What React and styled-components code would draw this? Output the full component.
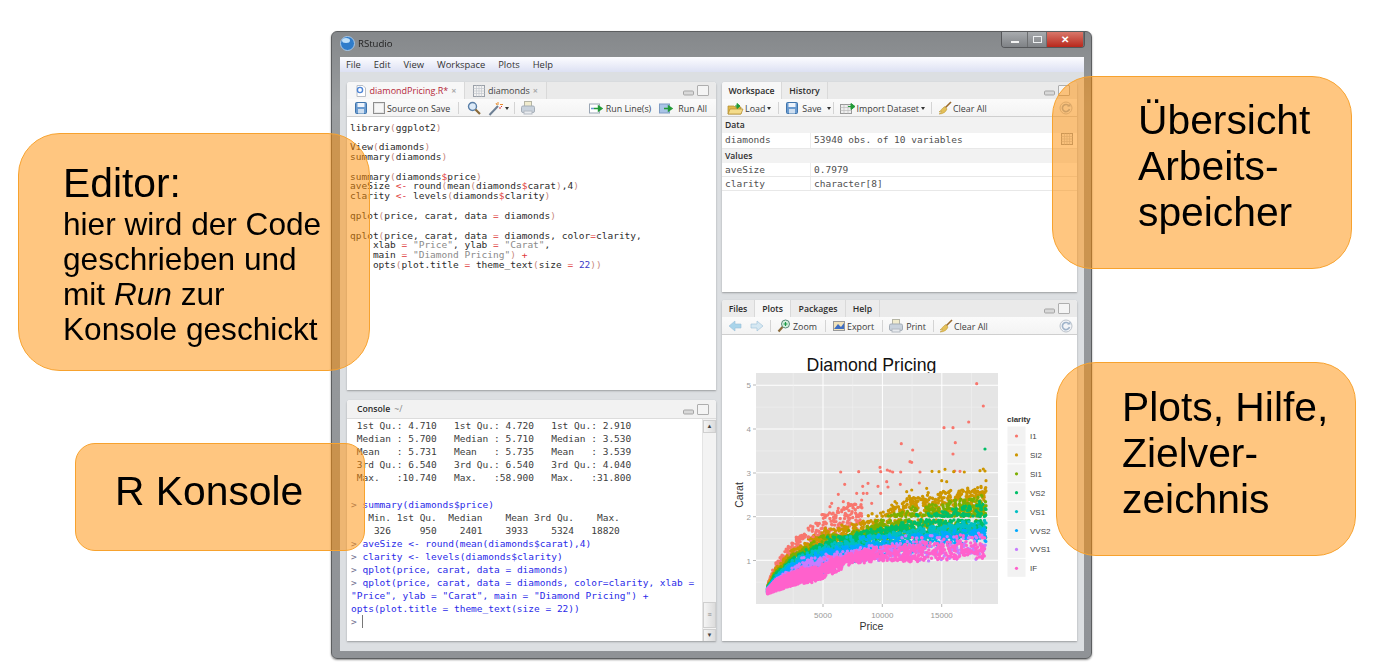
import React from "react";
import styled, { createGlobalStyle } from "styled-components";

const Global = createGlobalStyle`
  html, body { margin: 0; padding: 0; background: #fff; }
  body { font-family: "Liberation Sans", Arial, sans-serif; }
`;

const Page = styled.div`
  position: relative; width: 1385px; height: 670px; overflow: hidden; background: #fff;
  padding: 31px 0 0 331px; box-sizing: border-box;
`;
const Win = styled.div`
  width: 761px; height: 628px; box-sizing: border-box; display: flex; flex-direction: column;
  background: linear-gradient(#85888b, #9a9d9f 12%, #8f9296); border: 1px solid #5c5e60; border-radius: 6px;
  box-shadow: 0 1px 2px rgba(0,0,0,.45); padding: 0 7px 7px 8px; filter: blur(.5px);
`;
const TitleBar = styled.div`
  height: 25px; flex: none; display: flex; align-items: flex-start;
`;
const AppLogo = styled.svg`width: 15px; height: 15px; margin: 4px 3px 0 0; flex: none;`;
const AppTitle = styled.span`font: 9.6px/24px "Open Sans", sans-serif; color: #222;`;
const Controls = styled.div`
  margin-left: auto; display: flex; height: 15px; border: 1px solid #55575a; border-top: 0;
  border-radius: 0 0 4px 4px; overflow: hidden; margin-right: -1px;
`;
const Ctl = styled.div`
  width: ${p => p.$w}px; display: flex; align-items: center; justify-content: center;
  background: ${p => p.$red ? "linear-gradient(#d9776a,#b8281c)" : "linear-gradient(#a8abae,#7f8286)"};
  border-right: 1px solid #6c6e70; color: #fff; font: bold 10px/1 "Liberation Sans", sans-serif;
`;
const MinGlyph = styled.i`width: 8px; height: 2px; background: #f4f4f4; margin-top: 4px;`;
const MaxGlyph = styled.i`width: 7px; height: 5px; border: 1.5px solid #eef0f2;`;
const MenuBar = styled.div`
  height: 15px; flex: none; display: flex; align-items: center; gap: 13px; padding-left: 6px;
  background: linear-gradient(#fcfcff, #dde1f3); font: 9.4px "Open Sans", sans-serif; color: #333;
`;
const Body = styled.div`
  flex: 1; min-height: 0; background: #dcdfe2; display: grid; grid-template-columns: 369px 355px;
  gap: 6px; padding: 10px 7px 10px 7px;
`;
const Column = styled.div`display: flex; flex-direction: column; gap: ${p => p.$gap}px; min-height: 0;`;
const Pane = styled.section`
  height: ${p => p.$h}px; flex: none; display: flex; flex-direction: column; background: #fff; position: relative;
  box-shadow: 0 1px 2px rgba(0,0,0,.3); border-radius: 3px 3px 0 0; overflow: hidden;
`;
const TabBar = styled.div`
  height: 17px; flex: none; display: flex; align-items: stretch; background: #eaeaea;
  font: 600 8.7px "Open Sans", sans-serif; color: #2c2c2c;
`;
const Tab = styled.div`
  width: ${p => p.$w}px; flex: none; display: flex; align-items: center; justify-content: center; gap: 3px; box-sizing: border-box;
  background: ${p => p.$on ? "#f7f7f7" : "#ececec"}; border-right: 1px solid #d9d9d9; white-space: nowrap;
`;
const DocName = styled.span`color: ${p => p.$c}; font-weight: 400; font-size: 9px;`;
const Close = styled.span`color: #aaa; font-size: 9px; font-weight: 700;`;
const PaneCtl = styled.svg`margin-left: auto; width: 27px; height: 13px; margin-right: 6px; align-self: center; flex: none;`;
const Toolbar = styled.div`
  height: 18px; flex: none; display: flex; align-items: center; box-sizing: border-box;
  background: linear-gradient(#fbfbfb, #f3f3f3); border-bottom: 1px solid #cfcfcf;
  font: 8.9px "Open Sans", sans-serif; color: #3c3c3c; padding: 1px 0 0 ${p => p.$pad}px; white-space: nowrap;
`;
const Item = styled.span`display: inline-flex; align-items: center; gap: ${p => p.$g ?? 2}px; margin-left: ${p => p.$ml || 0}px;`;
const Sep = styled.i`width: 1px; height: 12px; flex: none; background: #d4d4d4; margin: 0 ${p => p.$m ?? 5}px 0 ${p => p.$l ?? p.$m ?? 5}px;`;
const Push = styled.span`margin-left: auto;`;
const Ico = styled.svg`width: ${p => p.$s || 13}px; height: ${p => p.$s || 13}px; flex: none;`;
const Caret = styled.i`width: 0; height: 0; border: 2px solid transparent; border-top: 3px solid #333; border-bottom: 0; margin-left: 1px;`;

const Code = styled.pre`
  margin: 0; padding: 5.5px 0 0 3px; font: 9.5px/9.83px "DejaVu Sans Mono", monospace; color: #2c2c2c;
`;
const Tok = styled.span`color: ${p => ({ op: "#e03a3a", par: "#c98a80", str: "#8a8a8a", num: "#3a3ac8" }[p.$k])};`;
const ConsoleHead = styled.div`
  height: 18px; flex: none; display: flex; align-items: center; background: #f2f2f2; padding-left: 10px;
  font: 600 8.7px "Open Sans", sans-serif; color: #2c2c2c; border-bottom: 1px solid #dcdcdc; gap: 4px;
`;
const Path = styled.span`color: #888; font-weight: 400;`;
const ConsoleBody = styled.div`flex: 1; min-height: 0; display: flex;`;
const ConsoleText = styled.pre`
  flex: 1; margin: 0; padding: 0 0 0 4px; font: 9.5px/13.1px "DejaVu Sans Mono", monospace; color: #3c3c3c; overflow: hidden;
`;
const Input = styled.span`color: #2a2ae8;`;
const Prompt = styled.span`color: #707090;`;
const Cursor = styled.i`display: inline-block; width: 1px; height: 13px; background: #777; vertical-align: -3px;`;
const Scroll = styled.div`
  width: 13px; flex: none; display: flex; flex-direction: column; background: #f3f3f3; border-left: 1px solid #e4e4e4;
`;
const ScrollBtn = styled.div`
  height: 13px; flex: none; margin-top: ${p => p.$top || 0}px; background: linear-gradient(90deg,#f4f4f4,#dcdcdc); border: 1px solid #cfcfcf; box-sizing: border-box;
  color: #444; font-size: 6px; line-height: 11px; text-align: center;
`;
const Thumb = styled(ScrollBtn)`height: 26px; line-height: 24px; font-size: 7px; color: #888;`;
const SectionHead = styled.div`
  height: ${p => p.$h}px; flex: none; background: #f2f2f2; display: flex; align-items: center; padding-left: 3px;
  font: 600 8.6px "Open Sans", sans-serif; color: #2c2c2c;
`;
const Row = styled.div`
  height: ${p => p.$h}px; flex: none; display: grid; grid-template-columns: 89px 1fr auto; align-items: start; border-bottom: 1px solid #e8e8e8; box-sizing: border-box;
  font: 9.5px/13px "DejaVu Sans Mono", monospace; color: #505050; padding-right: 4px;
`;
const Cell = styled.div`padding-left: 3px; height: 100%; border-right: ${p => p.$line ? "1px solid #ececec" : "0"};`;
const PlotArea = styled.div`flex: 1; min-height: 0; display: flex; background: #fff;`;
const PlotSvg = styled.svg`width: 355px; height: 306px; display: block;`;

const Callout = styled.div`
  position: absolute; box-sizing: border-box; left: ${p => p.$x}px; top: ${p => p.$y}px; width: ${p => p.$w}px; height: ${p => p.$h}px;
  border-radius: ${p => p.$r}px; background: rgba(255,141,1,.5); border: 1px solid #f7a22e; color: #000;
  padding: ${p => p.$pt}px 0 0 ${p => p.$pl}px; font-size: 40.8px; line-height: 46px; white-space: nowrap;
`;
const CalloutSmall = styled.div`font-size: 31.6px; line-height: 35.1px; margin-top: 1px;`;

/* ---------- icons ---------- */
const Save = () => (<Ico $s={12} viewBox="0 0 12 12"><rect x=".5" y=".5" width="11" height="11" rx="1" fill="#6a9bd0" stroke="#3f74ab"/><rect x="2.5" y="1" width="7" height="4" fill="#eef4fb"/><rect x="3" y="7" width="6" height="4.5" fill="#cfdff0"/></Ico>);
const Check = () => (<Ico $s={12} viewBox="0 0 12 12"><rect x=".5" y=".5" width="11" height="11" fill="#e4e4e4" stroke="#8e8e8e"/><rect x="2" y="2" width="8" height="8" fill="#f6f6f6"/></Ico>);
const Lens = () => (<Ico $s={14} viewBox="0 0 14 14"><circle cx="5.5" cy="5.5" r="4" fill="#dceaf8" stroke="#5a7fa8" strokeWidth="1.4"/><path d="M8.5 8.5 L13 13" stroke="#8a6a3a" strokeWidth="2.2"/></Ico>);
const Wand = () => (<Ico $s={15} viewBox="0 0 15 15"><path d="M1.5 14 L10 5" stroke="#6d7f94" strokeWidth="2"/><path d="M10 1v3M12 3.5h3M8 2l1 2" stroke="#e88a2a" strokeWidth="1"/><path d="M12 6v2M13 5l1 1" stroke="#d33" strokeWidth="1"/></Ico>);
const Printer = () => (<Ico $s={14} viewBox="0 0 14 14"><rect x="3.5" y=".5" width="7" height="5" fill="#f1ecce" stroke="#b5b5a5"/><rect x=".5" y="5" width="13" height="6.5" rx="1.5" fill="#c9d2dc" stroke="#a4adb7"/><rect x="3" y="10" width="8" height="3" fill="#e8ebef" stroke="#b4bac2"/></Ico>);
const RunLine = () => (<Ico $s={15} viewBox="0 0 15 13"><rect x=".5" y="2" width="10" height="9" fill="#fff" stroke="#9aa6b4"/><path d="M2 6.5h3" stroke="#6a96cf" strokeWidth="1.5"/><path d="M5 6.5h5M9.5 4l3.5 2.5-3.5 2.5z" stroke="#1f9a36" strokeWidth="1.4" fill="#1f9a36"/></Ico>);
const RunAll = () => (<Ico $s={15} viewBox="0 0 15 13"><rect x=".5" y="2" width="10" height="9" fill="#a9c4e6" stroke="#7f9cc4"/><path d="M5 6.5h5M9.5 4l3.5 2.5-3.5 2.5z" stroke="#1f9a36" strokeWidth="1.4" fill="#1f9a36"/></Ico>);
const Folder = () => (<Ico $s={17} viewBox="0 0 17 13"><path d="M1 4h6l1 1h6v7H1z" fill="#e0b84a" stroke="#b08a2c" strokeWidth=".7"/><path d="M1 12l2-5h13l-2 5z" fill="#f4dc8a" stroke="#b08a2c" strokeWidth=".7"/><path d="M8 4h4M10 1.5l3 2.5-3 2.5z" stroke="#1f9a36" fill="#1f9a36"/></Ico>);
const Broom = () => (<Ico $s={14} viewBox="0 0 14 14"><path d="M13 1 L7 7" stroke="#9b6a2c" strokeWidth="1.6"/><path d="M7 5.5 L9 8 C8 11 5 13 1 13 C3 12 3.5 11 3.5 10 C3 10.5 2 11 1 11 C3 9.5 4 7 7 5.5z" fill="#e4c05a" stroke="#b8922e" strokeWidth=".5"/></Ico>);
const ImportIco = () => (<Ico $s={16} viewBox="0 0 16 13"><rect x=".5" y="3" width="11" height="9" fill="#eee" stroke="#999"/><path d="M.5 6h11M.5 9h11M4 3v9M8 3v9" stroke="#bbb" strokeWidth=".7"/><path d="M8 5h4M11 2l4 3-4 3z" stroke="#1f9a36" fill="#1f9a36"/></Ico>);
const Refresh = () => (<Ico $s={14} viewBox="0 0 14 14"><circle cx="7" cy="7" r="6" fill="#f2f4f7" stroke="#bcc3cb"/><path d="M10 5 A3.6 3.6 0 1 0 10.5 8" fill="none" stroke="#9fb3c9" strokeWidth="1.6"/><path d="M8 5.5h3.5V2.5z" fill="#9fb3c9"/></Ico>);
const ArrowIco = ({ flip, c }) => (<Ico $s={14} viewBox="0 0 14 14"><path d={flip ? "M13 7L7 2v3H1v4h6v3z" : "M1 7l6-5v3h6v4H7v3z"} fill={c} stroke="#9cc0d8" strokeWidth=".6"/></Ico>);
const ZoomIco = () => (<Ico $s={14} viewBox="0 0 14 14"><circle cx="8.5" cy="5" r="4" fill="#d7f0df" stroke="#5a8a7a"/><path d="M6.5 5h4M8.5 3v4" stroke="#1a9a46" strokeWidth="1.2"/><path d="M5.5 8 L1.5 12.5" stroke="#8a6a3a" strokeWidth="2.2"/></Ico>);
const ExportIco = () => (<Ico $s={14} viewBox="0 0 14 14"><rect x="1.5" y="2.5" width="11" height="9" fill="#f1e2ba" stroke="#999"/><path d="M2 10l4-5 3 3 3-4v6z" fill="#3f6ec2"/></Ico>);
const DocIco = () => (<Ico $s={12} viewBox="0 0 12 12"><path d="M2 .5h6l2.5 2.5v8.5H2z" fill="#fff" stroke="#b8bec6"/><circle cx="5" cy="5" r="2.6" fill="none" stroke="#4f86d6" strokeWidth="1.4"/></Ico>);
const GridIco = ({ s = 12 }) => (<Ico $s={s} viewBox="0 0 12 12"><rect x=".5" y=".5" width="11" height="11" fill="#f2f2f2" stroke="#9aa0a8"/><path d="M.5 3.5h11M.5 6h11M.5 8.5h11M3.5 .5v11M6 .5v11M8.5 .5v11" stroke="#c4c8cf" strokeWidth=".7"/></Ico>);
const PaneButtons = () => (
  <PaneCtl viewBox="0 0 27 13">
    <rect x=".5" y="7" width="10" height="4" rx="1" fill="#d8d8d8" stroke="#a5a5a5"/>
    <rect x="14.5" y="1.5" width="11" height="10" rx=".5" fill="#f4f4f4" stroke="#aeaeae"/>
  </PaneCtl>
);

/* ---------- editor code ---------- */
const editorCode = `library(ggplot2)

View(diamonds)
summary(diamonds)

summary(diamonds$price)
aveSize <- round(mean(diamonds$carat),4)
clarity <- levels(diamonds$clarity)

qplot(price, carat, data = diamonds)

qplot(price, carat, data = diamonds, color=clarity,
    xlab = "Price", ylab = "Carat",
    main = "Diamond Pricing") +
    opts(plot.title = theme_text(size = 22))`;

const highlight = src =>
  src.split(/("[^"]*"|<-|[=+$]|[()]|\b\d+\b(?!\)\n))/).map((t, i) => {
    if (!t) return null;
    let k = null;
    if (t[0] === '"') k = "str";
    else if (t === "<-" || t === "=" || t === "+" || t === "$") k = "op";
    else if (t === "(" || t === ")") k = "par";
    else if (/^\d+$/.test(t)) k = "num";
    return k ? <Tok key={i} $k={k}>{t}</Tok> : <React.Fragment key={i}>{t}</React.Fragment>;
  });

/* ---------- scatter plot ---------- */
const px = [0.3, 1, 2.5, 5, 7.5, 10, 12.5, 15, 18.8];
/* colour, count, price skew, lower carat envelope, upper carat envelope */
const bands = [
  ["#F8766D", 380, 1.4, [.33,.55,1.05,1.4,1.7,2,2,2,2], [.42,.95,1.48,2.0,2.3,2.3,2.2,2,2]],
  ["#CD9600", 1100, 1.25, [.3,.42,.8,1.1,1.3,1.45,1.7,1.9,2], [.4,.82,1.27,1.68,1.82,2.1,2.5,2.55,2.72]],
  ["#7CAE00", 1100, 1.3, [.28,.42,.7,1,1.15,1.3,1.5,1.6,1.7], [.38,.74,1.15,1.5,1.68,1.9,2.2,2.3,2.5]],
  ["#00BE67", 1300, 1.35, [.25,.38,.6,.9,1.1,1.25,1.4,1.5,1.55], [.37,.7,1.08,1.42,1.6,1.72,1.9,2.1,2.35]],
  ["#00BFC4", 1100, 1.5, [.25,.36,.55,.85,1.1,1.2,1.35,1.45,1.5], [.36,.64,1.02,1.32,1.48,1.58,1.68,1.78,1.95]],
  ["#00A9FF", 1200, 1.9, [.25,.32,.5,.72,1,1.1,1.2,1.35,1.45], [.35,.6,.95,1.22,1.35,1.48,1.55,1.62,1.72]],
  ["#C77CFF", 1000, 2.5, [.25,.31,.48,.68,.98,1.02,1.05,1.07,1.1], [.34,.56,.85,1.1,1.25,1.35,1.45,1.5,1.6]],
  ["#FF61CC", 1900, 3.2, [.23,.29,.42,.58,.95,1,1,1.03,1.05], [.32,.55,.76,.9,1.17,1.3,1.4,1.45,1.52]],
];
const lerp = (ys, p) => {
  for (let i = 0; i < px.length - 1; i++) {
    if (p <= px[i + 1]) return ys[i] + (ys[i + 1] - ys[i]) * (p - px[i]) / (px[i + 1] - px[i]);
  }
  return ys[ys.length - 1];
};
const X = p => 763.6 + p * 11.88;
const Y = c => 604 - c * 43.75;
let seed = 12345;
const rnd = () => { seed = (seed * 16807) % 2147483647; return seed / 2147483647; };
const dot = (x, y) => `M${x.toFixed(1)} ${y.toFixed(1)}h0`;
const bandPaths = bands.map(([color, n, skew, lo, hi], idx) => {
  let d = "";
  for (let i = 0; i < n; i++) {
    const r = rnd();
    const p = idx === 0 ? 0.4 + Math.pow(r, skew) * 8 : 0.33 + Math.pow(r, skew) * 18.4;
    let c = lerp(lo, p) + (lerp(hi, p) - lerp(lo, p)) * rnd();
    if (p > 3 && rnd() < .35) {
      for (const s of [1, 1.5, 2]) if (c > s - .12 && c < s + .12) c = s + rnd() * .05;
    }
    if (p > 3) c += (rnd() - .5) * .09;
    if (c > 1.93 && c < 2.0 && p > 8) continue;
    if (c > 1.44 && c < 1.5 && p > 9 && rnd() < .85) continue;
    d += dot(X(p), Y(c));
  }
  return { color, d };
});
const fromZoom = pts => pts.map(([x, y]) => dot(715 + x / 3, 285 + y / 3)).join("");
const i1Out = fromZoom([[785,296],[805,363],[761,411],[687,428],[714,428],[721,473],[714,507],[559,476],[593,495],[585,530],[590,532],[495,547],[497,560],[377,561],[431,560],[517,555],[525,558],[533,561],[557,561],[615,561],[719,558],[735,559],[389,598],[370,628],[425,625],[443,604],[459,595],[489,604],[515,590],[519,606],[556,598],[613,594],[445,625],[456,625],[497,625],[350,655],[345,665],[330,690],[385,650],[400,655],[380,680],[405,690],[360,690],[370,670],[395,670],[325,700],[410,685],[440,645],[470,655],[250,757],[265,757],[280,757],[295,755],[310,750]]);
const si2Out = fromZoom([[651,559],[672,560],[690,553],[716,560],[748,561],[680,587],[695,590],[795,557],[805,552],[810,558],[813,587],[575,620],[590,615],[540,650],[530,660],[545,655],[635,610],[680,625]]);
const vs2Out = fromZoom([[810,492]]);

const xTicks = [[823, "5000"], [882.3, "10000"], [941.7, "15000"]];
const yTicks = [[385, "5"], [429, "4"], [473, "3"], [516.7, "2"], [560.5, "1"]];
const legend = [["I1","#F8766D"],["SI2","#CD9600"],["SI1","#7CAE00"],["VS2","#00BE67"],["VS1","#00BFC4"],["VVS2","#00A9FF"],["VVS1","#C77CFF"],["IF","#FF61CC"]];

const Plot = () => (
  <PlotSvg viewBox="722 335 355 306" fontFamily="'Liberation Sans', sans-serif">
    <text x="871.5" y="371" textAnchor="middle" fontSize="17.7" fill="#111">Diamond Pricing</text>
    <rect x="756" y="373" width="242" height="231" fill="#e5e5e5"/>
    {[.5,1,1.5,2,2.5,3,3.5,4,4.5,5].map(c => {
      const y = Y(c);
      return <path key={c} d={`M756 ${y}H998`} stroke={Number.isInteger(c) ? "#fff" : "#f0f0f0"} strokeWidth={Number.isInteger(c) ? 1 : .6}/>;
    })}
    {[2500,5000,7500,10000,12500,15000,17500].map(v => {
      const x = X(v / 1000);
      return <path key={v} d={`M${x} 373V604`} stroke={v % 5000 === 0 ? "#fff" : "#f0f0f0"} strokeWidth={v % 5000 === 0 ? 1 : .6}/>;
    })}
    {bandPaths.map(b => <path key={b.color} d={b.d} stroke={b.color} strokeWidth="3.4" strokeLinecap="round" fill="none"/>)}
    <path d={i1Out} stroke="#F8766D" strokeWidth="3.2" strokeLinecap="round" fill="none"/>
    <path d={si2Out} stroke="#CD9600" strokeWidth="3.2" strokeLinecap="round" fill="none"/>
    <path d={vs2Out} stroke="#00BE67" strokeWidth="3.2" strokeLinecap="round" fill="none"/>
    {yTicks.map(([y, l]) => (
      <g key={l}>
        <text x="751" y={y + 3} textAnchor="end" fontSize="8" fill="#999">{l}</text>
        <path d={`M753 ${y}h3`} stroke="#999" strokeWidth=".7"/>
      </g>
    ))}
    {xTicks.map(([x, l]) => (
      <g key={l}>
        <text x={x} y="618" textAnchor="middle" fontSize="8" fill="#999">{l}</text>
        <path d={`M${x} 604v3`} stroke="#999" strokeWidth=".7"/>
      </g>
    ))}
    <text x="871.5" y="630" textAnchor="middle" fontSize="10.5" fill="#333">Price</text>
    <text transform="translate(742.5 495) rotate(-90)" textAnchor="middle" fontSize="10.5" fill="#333">Carat</text>
    <text x="1007" y="422" fontSize="8" fontWeight="700" fill="#333">clarity</text>
    {legend.map(([l, c], i) => (
      <g key={l}>
        <rect x="1007.5" y={426.5 + i * 18.9} width="18" height="18" fill="#f2f2f2"/>
        <circle cx="1016.5" cy={436 + i * 18.9} r="1.6" fill={c}/>
        <text x="1030" y={439 + i * 18.9} fontSize="8" fill="#444">{l}</text>
      </g>
    ))}
  </PlotSvg>
);

const H = ({ children }) => <Input><Prompt>&gt; </Prompt>{children}</Input>;

export default function App() {
  return (
    <Page>
      <Global />
      <Win>
        <TitleBar>
          <AppLogo viewBox="0 0 15 15">
            <circle cx="7.5" cy="7.5" r="7" fill="#2f7cca" stroke="#a8c8e8"/>
            <ellipse cx="6" cy="4.5" rx="4" ry="2.5" fill="#bfe0fa"/>
          </AppLogo>
          <AppTitle>RStudio</AppTitle>
          <Controls>
            <Ctl $w={25}><MinGlyph /></Ctl>
            <Ctl $w={18}><MaxGlyph /></Ctl>
            <Ctl $w={36} $red>✕</Ctl>
          </Controls>
        </TitleBar>
        <MenuBar>
          <span>File</span><span>Edit</span><span>View</span><span>Workspace</span><span>Plots</span><span>Help</span>
        </MenuBar>
        <Body>
          <Column $gap={10}>
            <Pane $h={308}>
              <TabBar>
                <Tab $w={118} $on><DocIco /><DocName $c="#b5283a">diamondPricing.R*</DocName><Close>×</Close></Tab>
                <Tab $w={82}><GridIco /><DocName $c="#444">diamonds</DocName><Close>×</Close></Tab>
                <PaneButtons />
              </TabBar>
              <Toolbar $pad={8}>
                <Save /><Item $ml={6} $g={2}><Check />Source on Save</Item><Sep $m={8} />
                <Lens /><Item $ml={7} $g={1}><Wand /><Caret /></Item><Sep $l={5} $m={6} /><Printer />
                <Push /><Item><RunLine />Run Line(s)</Item><Item $ml={8} $g={4}><RunAll />Run All</Item><Item $ml={9} />
              </Toolbar>
              <Code>{highlight(editorCode)}</Code>
            </Pane>
            <Pane $h={241}>
              <ConsoleHead>Console <Path>~/</Path><PaneButtons /></ConsoleHead>
              <ConsoleBody>
                <ConsoleText>{` 1st Qu.: 4.710   1st Qu.: 4.720   1st Qu.: 2.910  
 Median : 5.700   Median : 5.710   Median : 3.530  
 Mean   : 5.731   Mean   : 5.735   Mean   : 3.539  
 3rd Qu.: 6.540   3rd Qu.: 6.540   3rd Qu.: 4.040  
 Max.   :10.740   Max.   :58.900   Max.   :31.800  

`}<H>summary(diamonds$price)</H>{`
   Min. 1st Qu.  Median    Mean 3rd Qu.    Max. 
    326     950    2401    3933    5324   18820 
`}<H>aveSize &lt;- round(mean(diamonds$carat),4)</H>{`
`}<H>clarity &lt;- levels(diamonds$clarity)</H>{`
`}<H>qplot(price, carat, data = diamonds)</H>{`
`}<H>qplot(price, carat, data = diamonds, color=clarity, xlab =</H>{`
`}<Input>{`"Price", ylab = "Carat", main = "Diamond Pricing") +
opts(plot.title = theme_text(size = 22))`}</Input>{`
`}<Prompt>&gt; </Prompt><Cursor /></ConsoleText>
                <Scroll>
                  <ScrollBtn $top={1}>▲</ScrollBtn>
                  <Thumb $top={169}>≡</Thumb>
                  <ScrollBtn $top={1}>▼</ScrollBtn>
                </Scroll>
              </ConsoleBody>
            </Pane>
          </Column>
          <Column $gap={8}>
            <Pane $h={210}>
              <TabBar>
                <Tab $w={60} $on>Workspace</Tab>
                <Tab $w={46}>History</Tab>
                <PaneButtons />
              </TabBar>
              <Toolbar $pad={5}>
                <Item $g={1}><Folder />Load<Caret /></Item><Sep $m={7} />
                <Item $g={4}><Save />Save<Caret /></Item><Sep $l={2} $m={6} />
                <Item $g={1}><ImportIco />Import Dataset<Caret /></Item><Sep $l={6} $m={6} />
                <Item $g={1}><Broom />Clear All</Item>
                <Push /><Item><Refresh /></Item><Item $ml={4} />
              </Toolbar>
              <SectionHead $h={16}>Data</SectionHead>
              <Row $h={16}><Cell $line>diamonds</Cell><Cell>53940 obs. of 10 variables</Cell><GridIco /></Row>
              <SectionHead $h={14}>Values</SectionHead>
              <Row $h={14}><Cell $line>aveSize</Cell><Cell>0.7979</Cell></Row>
              <Row $h={14}><Cell $line>clarity</Cell><Cell>character[8]</Cell></Row>
            </Pane>
            <Pane $h={341}>
              <TabBar>
                <Tab $w={33}>Files</Tab>
                <Tab $w={36} $on>Plots</Tab>
                <Tab $w={55}>Packages</Tab>
                <Tab $w={34}>Help</Tab>
                <PaneButtons />
              </TabBar>
              <Toolbar $pad={6}>
                <ArrowIco c="#a9d4ea" /><Item $ml={8}><ArrowIco flip c="#d6e8f2" /></Item><Sep $l={6} $m={6} />
                <Item $g={2}><ZoomIco />Zoom</Item><Sep $l={8} $m={6} />
                <Item $g={1}><ExportIco />Export</Item><Sep $l={8} $m={6} />
                <Item $g={3}><Printer />Print</Item><Sep $l={7} $m={5} />
                <Item $g={1}><Broom />Clear All</Item>
                <Push /><Item><Refresh /></Item><Item $ml={4} />
              </Toolbar>
              <PlotArea><Plot /></PlotArea>
            </Pane>
          </Column>
        </Body>
      </Win>

      <Callout $x={18} $y={133} $w={352} $h={238} $r={42} $pt={26} $pl={44}>
        Editor:
        <CalloutSmall>hier wird der Code<br />geschrieben und<br />mit <em>Run</em> zur<br />Konsole geschickt</CalloutSmall>
      </Callout>
      <Callout $x={75} $y={443} $w={290} $h={108} $r={20} $pt={24} $pl={39}>R Konsole</Callout>
      <Callout $x={1052} $y={76} $w={300} $h={193} $r={40} $pt={20} $pl={85}>Übersicht<br />Arbeits-<br />speicher</Callout>
      <Callout $x={1056} $y={362} $w={300} $h={194} $r={40} $pt={21} $pl={65}>Plots, Hilfe,<br />Zielver-<br />zeichnis</Callout>
    </Page>
  );
}
